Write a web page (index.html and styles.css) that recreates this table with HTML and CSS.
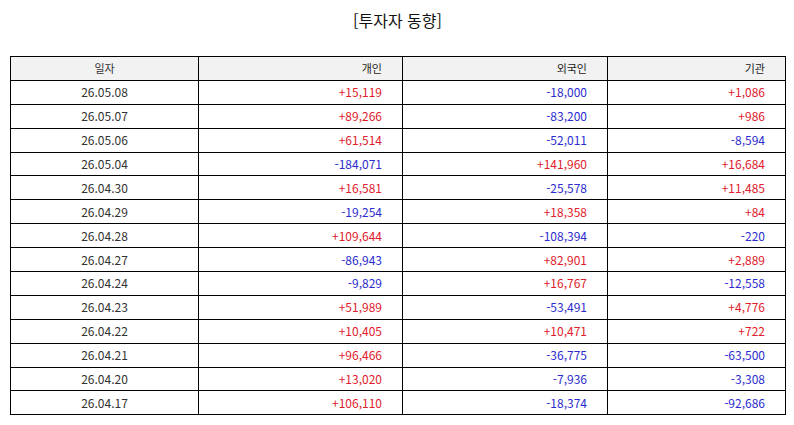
FILE: index.html
```html
<!DOCTYPE html>
<html lang="ko">
<head>
<meta charset="utf-8">
<link rel="stylesheet" href="styles.css">
</head>
<body>
<div class="page">
  <h1 class="title">[투자자 동향]</h1>
  <table class="grid">
    <colgroup>
      <col class="c1"><col class="c2"><col class="c3"><col class="c4">
    </colgroup>
    <thead>
      <tr><th class="date">일자</th><th>개인</th><th>외국인</th><th>기관</th></tr>
    </thead>
    <tbody>
      <tr><td class="date">26.05.08</td><td class="up">+15,119</td><td class="dn">-18,000</td><td class="up">+1,086</td></tr>
      <tr><td class="date">26.05.07</td><td class="up">+89,266</td><td class="dn">-83,200</td><td class="up">+986</td></tr>
      <tr><td class="date">26.05.06</td><td class="up">+61,514</td><td class="dn">-52,011</td><td class="dn">-8,594</td></tr>
      <tr><td class="date">26.05.04</td><td class="dn">-184,071</td><td class="up">+141,960</td><td class="up">+16,684</td></tr>
      <tr><td class="date">26.04.30</td><td class="up">+16,581</td><td class="dn">-25,578</td><td class="up">+11,485</td></tr>
      <tr><td class="date">26.04.29</td><td class="dn">-19,254</td><td class="up">+18,358</td><td class="up">+84</td></tr>
      <tr><td class="date">26.04.28</td><td class="up">+109,644</td><td class="dn">-108,394</td><td class="dn">-220</td></tr>
      <tr><td class="date">26.04.27</td><td class="dn">-86,943</td><td class="up">+82,901</td><td class="up">+2,889</td></tr>
      <tr><td class="date">26.04.24</td><td class="dn">-9,829</td><td class="up">+16,767</td><td class="dn">-12,558</td></tr>
      <tr><td class="date">26.04.23</td><td class="up">+51,989</td><td class="dn">-53,491</td><td class="up">+4,776</td></tr>
      <tr><td class="date">26.04.22</td><td class="up">+10,405</td><td class="up">+10,471</td><td class="up">+722</td></tr>
      <tr><td class="date">26.04.21</td><td class="up">+96,466</td><td class="dn">-36,775</td><td class="dn">-63,500</td></tr>
      <tr><td class="date">26.04.20</td><td class="up">+13,020</td><td class="dn">-7,936</td><td class="dn">-3,308</td></tr>
      <tr><td class="date">26.04.17</td><td class="up">+106,110</td><td class="dn">-18,374</td><td class="dn">-92,686</td></tr>
    </tbody>
  </table>
</div>
</body>
</html>
```

FILE: styles.css
```css
html, body {
  margin: 0;
  padding: 0;
  background: #ffffff;
}
.page {
  padding: 0 9px 0 10px;
  font-family: "Noto Sans CJK KR", "Noto Sans", sans-serif;
  color: #222;
}
.title {
  margin: 0;
  height: 56px;
  padding-top: 8px;
  box-sizing: border-box;
  text-align: center;
  font-size: 16px;
  font-weight: 400;
  line-height: 24px;
  color: #111;
}
.grid {
  width: 775px;
  border-collapse: collapse;
  table-layout: fixed;
  font-size: 12px;
}
.c1 { width: 188px; }
.c2 { width: 204px; }
.c3 { width: 205px; }
.c4 { width: 178px; }
.grid th, .grid td {
  border: 1.5px solid #000;
  height: 23.9px;
  padding: 0 20px 0 0;
  text-align: right;
  font-weight: 400;
  line-height: 14px;
  box-sizing: border-box;
}
.grid th {
  background: #f2f2f2;
  color: #222;
  font-size: 11px;
}
.grid .date {
  text-align: center;
  padding: 0;
  color: #333;
}
.up { color: #e0202c; }
.dn { color: #2c2ccf; }
```
